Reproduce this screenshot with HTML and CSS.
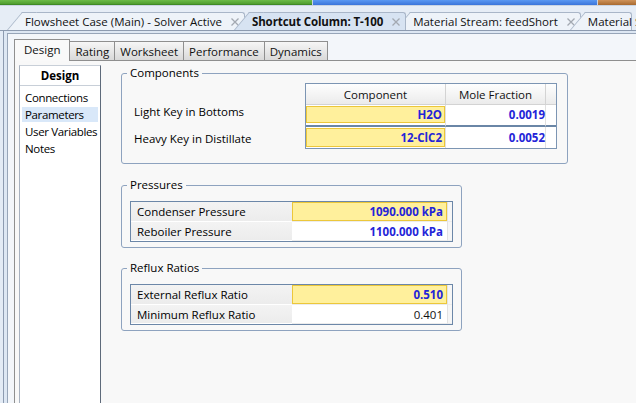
FILE: index.html
```html
<!DOCTYPE html>
<html>
<head>
<meta charset="utf-8">
<link rel="stylesheet" href="styles.css">
</head>
<body>
<div class="topbar"><div class="seg green"></div><div class="seg blue"></div><div class="seg orange"></div></div>
<div class="doctabs">
  <div class="dtab t1"><span>Flowsheet Case (Main) - Solver Active</span><svg class="x" width="8" height="8" viewBox="0 0 8 8"><path d="M0.5 0.5L7.5 7.5M7.5 0.5L0.5 7.5"/></svg></div>
  <div class="dtab active"><span>Shortcut Column: T-100</span><svg class="x" width="8" height="8" viewBox="0 0 8 8"><path d="M0.5 0.5L7.5 7.5M7.5 0.5L0.5 7.5"/></svg></div>
  <div class="dtab"><span>Material Stream: feedShort</span><svg class="x" width="8" height="8" viewBox="0 0 8 8"><path d="M0.5 0.5L7.5 7.5M7.5 0.5L0.5 7.5"/></svg></div>
  <div class="dtab clip"><span>Material S</span></div>
</div>
<div class="frame">
  <div class="inner">
    <div class="ptabs">
      <div class="ptab on">Design</div>
      <div class="ptab">Rating</div>
      <div class="ptab">Worksheet</div>
      <div class="ptab">Performance</div>
      <div class="ptab">Dynamics</div>
    </div>
    <div class="page">
      <nav class="nav">
        <div class="nav-head">Design</div>
        <div class="nav-list">
          <div class="nav-item">Connections</div>
          <div class="nav-item sel">Parameters</div>
          <div class="nav-item">User Variables</div>
          <div class="nav-item">Notes</div>
        </div>
      </nav>
      <main class="content">
        <fieldset class="grp comps">
          <legend>Components</legend>
          <div class="comp-body">
            <div class="comp-labels">
              <div>Light Key in Bottoms</div>
              <div>Heavy Key in Distillate</div>
            </div>
            <div class="ctable">
              <div class="ch">Component</div><div class="ch">Mole Fraction</div><div class="ch last"></div>
              <div class="cc r1"><div class="yl val">H2O</div></div><div class="cc r1 val num">0.0019</div><div class="cc r1 last"></div>
              <div class="cc r2"><div class="yl val">12-ClC2</div></div><div class="cc r2 val num">0.0052</div><div class="cc r2 last"></div>
            </div>
          </div>
        </fieldset>

        <fieldset class="grp small">
          <legend>Pressures</legend>
          <div class="ptable">
            <div class="pl">Condenser Pressure</div><div class="pv"><div class="yl val">1090.000 kPa</div></div><div class="pe"></div>
            <div class="pl">Reboiler Pressure</div><div class="pv val">1100.000 kPa</div><div class="pe"></div>
          </div>
        </fieldset>

        <fieldset class="grp small">
          <legend>Reflux Ratios</legend>
          <div class="ptable">
            <div class="pl">External Reflux Ratio</div><div class="pv"><div class="yl val">0.510</div></div><div class="pe"></div>
            <div class="pl">Minimum Reflux Ratio</div><div class="pv plain">0.401</div><div class="pe"></div>
          </div>
        </fieldset>
      </main>
    </div>
  </div>
</div>
</body>
</html>
```
FILE: styles.css
```css
* { box-sizing: border-box; }
body {
  margin: 0;
  width: 636px;
  height: 403px;
  overflow: hidden;
  background: #e3ebf5;
  font-family: "Open Sans", "Noto Sans", sans-serif;
  font-size: 11.5px;
  color: #000;
}
.topbar { display: flex; height: 6px; gap: 1px; background: #c9d4e2; }
.seg { height: 5px; }
.green { width: 312px; background: linear-gradient(#6cbb48, #4f9d2f); border-bottom: 1px solid #3f8a25; }
.blue { width: 284px; background: linear-gradient(#5a98f2, #3a74da); }
.orange { flex: 1; background: linear-gradient(#cf935a, #a86a30); }

.doctabs {
  height: 25px;
  display: flex;
  align-items: flex-end;
  padding-left: 22px;
  border-bottom: 1px solid #8d9bb0;
  background: #e6edf6;
  overflow: hidden;
}
.dtab {
  position: relative;
  z-index: 1;
  height: 18px;
  display: flex;
  align-items: center;
  flex: none;
  padding: 0 5px 0 3px;
  margin-right: 4px;
  background: #eef3f9;
  border-top: 1px solid #a9b6c8;
  border-right: 1px solid #a9b6c8;
  border-top-right-radius: 3px;
  white-space: nowrap;
  color: #111;
}
.dtab::before {
  content: "";
  position: absolute;
  left: -15px;
  top: -1px;
  bottom: 0;
  width: 14px;
  background: inherit;
  border-left: 1px solid #a9b6c8;
  border-top: 1px solid #a9b6c8;
  transform: skewX(-40deg);
  transform-origin: bottom left;
  z-index: -1;
}
.dtab.active { z-index: 3; background: #d7e3f2; font-weight: bold; letter-spacing: -0.1px; }
.dtab .x { margin-left: 9px; stroke: #a3a9b1; stroke-width: 1.3; fill: none; }
.dtab.clip { flex: 1; min-width: 0; }

.frame {
  margin-left: 3px;
  border-left: 1px solid #8d9bb0;
  padding: 2px 0 0 3px;
  height: 372px;
  background: #dde7f3;
}
.inner {
  height: 100%;
  border-left: 1px solid #97a5b8;
  border-top: 1px solid #97a5b8;
  background: #f3f6fa;
  padding: 5px 0 0 6px;
  display: flex;
  flex-direction: column;
}
.ptabs { display: flex; align-items: flex-end; height: 21px; position: relative; z-index: 2; }
.ptab {
  height: 19px;
  padding: 0 5px;
  margin-left: -1px;
  border: 1px solid #8f8f8f;
  border-bottom: none;
  background: linear-gradient(#f6f6f6, #d9d9d9);
  display: flex;
  align-items: center;
  color: #111;
}
.ptab.on {
  height: 22px;
  margin-left: 0;
  margin-bottom: -1px;
  padding: 0 9px 2px;
  background: #f9f9f9;
}
.page {
  flex: 1;
  display: flex;
  border-left: 1px solid #8f8f8f;
  border-top: 1px solid #8f8f8f;
  background: #f8f8f8;
  padding: 4px 0 0 4px;
}
.nav {
  width: 82px;
  flex: none;
  background: #fff;
  border-left: 1px solid #a7b1bf;
  border-top: 1px solid #c8cfd8;
  border-right: 1px solid #5e6a7a;
}
.nav-head {
  height: 20px;
  border-bottom: 1px solid #c8cfd8;
  font-weight: bold;
  text-align: center;
  line-height: 19px;
}
.nav-list { padding-top: 4px; }
.nav-item {
  height: 15px;
  line-height: 15px;
  margin: 0 2px 2px;
  padding-left: 3px;
  white-space: nowrap;
  letter-spacing: -0.35px;
}
.nav-item.sel { background: #d9e8f9; }

.content { flex: 1; padding-left: 20px; }
.grp {
  margin: 0;
  padding: 0;
  border: 1px solid #8ea3bf;
  border-radius: 3px;
  min-width: 0;
}
.grp legend { padding: 0 3px; margin-left: 5px; line-height: 16px; }
.comps { width: 447px; height: 99px; }
.small { width: 341px; height: 71px; margin-top: 13px; }
.small + .small { margin-top: 12px; }

.comp-body { display: flex; }
.comp-labels {
  width: 183px;
  padding: 23px 0 0 12px;
  display: flex;
  flex-direction: column;
  gap: 11px;
  line-height: 16px;
}
.ctable {
  margin-top: 2px;
  width: 252px;
  border: 1px solid #7c95b3;
  display: grid;
  grid-template-columns: 140px 100px 1fr;
  grid-template-rows: 21px 22px 21px;
  background: #fff;
}
.ch {
  background: linear-gradient(#fefefe, #ebebeb);
  border-right: 1px solid #d3d3d3;
  border-bottom: 1px solid #d3d3d3;
  display: flex;
  align-items: center;
  justify-content: center;
  color: #111;
}
.cc { border-right: 1px solid #e0e0e0; display: flex; align-items: center; }
.cc.r1 { padding: 1px 0 2px; border-bottom: 2px solid #6a86a6; }
.cc.r2 { padding: 1px 0 1px; }
.last { border-right: none; }
.ch.last { border-right: none; }
.yl {
  flex: 1;
  align-self: stretch;
  background: #fff09c;
  border: 1px solid #ecc73a;
  display: flex;
  align-items: center;
  justify-content: flex-end;
  padding-right: 2px;
}
.val { color: #2424d8; font-weight: bold; }
.num { justify-content: flex-end; padding-right: 4px; }

.ptable {
  margin: 8px 0 0 8px;
  width: 323px;
  border: 1px solid #6c87a8;
  display: grid;
  grid-template-columns: 161px 155px 1fr;
  grid-template-rows: 20px 19px;
  background: #fff;
}
.pl {
  background: linear-gradient(#f3f3f3, #ececec);
  border-bottom: 1px solid #fff;
  padding-left: 6px;
  display: flex;
  align-items: center;
  white-space: nowrap;
}
.pv {
  display: flex;
  align-items: center;
  justify-content: flex-end;
  padding-right: 4px;
  border-bottom: 1px solid #ececec;
}
.pv:has(.yl) { padding: 0; }
.pv .yl { padding-right: 3px; }
.pv.plain { color: #111; }
.pe { background: #f6f6f6; border-left: 1px solid #e2e2e2; border-bottom: 1px solid #ececec; }
```
